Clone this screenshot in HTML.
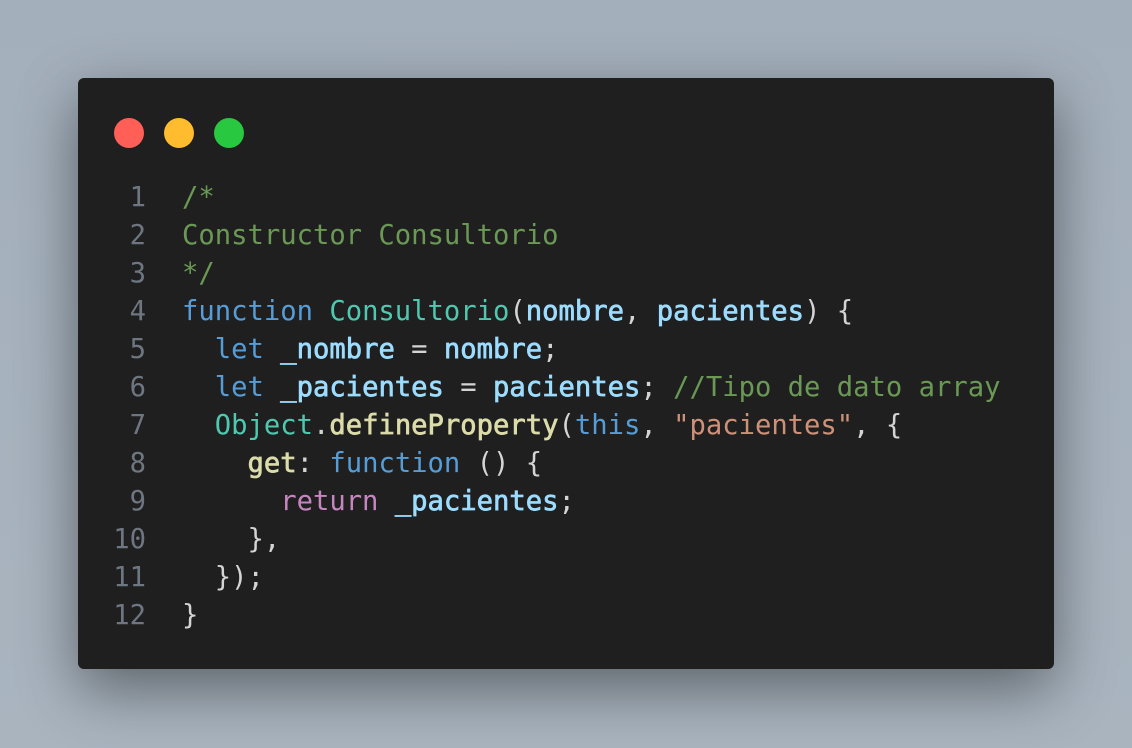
<!DOCTYPE html>
<html><head><meta charset="utf-8"><style>
html,body{margin:0;padding:0}
body{width:1132px;height:748px;background:linear-gradient(180deg,#a3afbb,#a9b4bf);position:relative;overflow:hidden}
.win{position:absolute;left:78px;top:78px;width:976px;height:591px;background:#1f1f1f;border-radius:6px;box-shadow:0 20px 60px rgba(0,0,0,.45)}
.dot{position:absolute;top:40px;width:30px;height:30px;border-radius:50%}
pre{position:absolute;margin:0;top:101px;left:0;font-family:"DejaVu Sans Mono","Liberation Mono",monospace;font-size:27.2px;line-height:38px;color:#d4d4d4}
.ln{display:inline-block;width:68px;text-align:right;color:#6e7681;margin-right:36px}
.c{color:#6a9955}.k{color:#569cd6}.t{color:#4ec9b0}.v{color:#9cdcfe;-webkit-text-stroke:0.7px #9cdcfe}.f{color:#dcdcaa;-webkit-text-stroke:0.7px #dcdcaa}.s{color:#ce9178}.r{color:#c586c0}
</style></head><body>
<div class="win">
<div class="dot" style="left:36px;background:#ff5f57"></div>
<div class="dot" style="left:86px;background:#febc2e"></div>
<div class="dot" style="left:136px;background:#28c840"></div>
<pre><span class="ln">1</span><span class="c">/*</span>
<span class="ln">2</span><span class="c">Constructor Consultorio</span>
<span class="ln">3</span><span class="c">*/</span>
<span class="ln">4</span><span class="k">function</span> <span class="t">Consultorio</span>(<span class="v">nombre</span>, <span class="v">pacientes</span>) {
<span class="ln">5</span>  <span class="k">let</span> <span class="v">_nombre</span> = <span class="v">nombre</span>;
<span class="ln">6</span>  <span class="k">let</span> <span class="v">_pacientes</span> = <span class="v">pacientes</span>; <span class="c">//Tipo de dato array</span>
<span class="ln">7</span>  <span class="t">Object</span>.<span class="f">defineProperty</span>(<span class="k">this</span>, <span class="s">"pacientes"</span>, {
<span class="ln">8</span>    <span class="f">get</span>: <span class="k">function</span> () {
<span class="ln">9</span>      <span class="r">return</span> <span class="v">_pacientes</span>;
<span class="ln">10</span>    },
<span class="ln">11</span>  });
<span class="ln">12</span>}</pre>
</div>
</body></html>
